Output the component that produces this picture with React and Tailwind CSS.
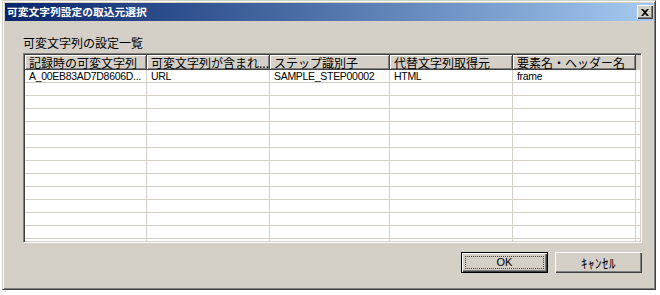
import React from 'react';

const jp = "font-['Noto_Sans_CJK_JP',sans-serif]";
const latin = "font-['Liberation_Sans','Noto_Sans_CJK_JP',sans-serif]";

const colWidths = ['w-[122px]', 'w-[123px]', 'w-[120px]', 'w-[123px]', 'w-[123px]'];
const headers = ['記録時の可変文字列', '可変文字列が含まれ...', 'ステップ識別子', '代替文字列取得元', '要素名・ヘッダー名'];
const firstRow = ['A_00EB83AD7D8606D...', 'URL', 'SAMPLE_STEP00002', 'HTML', 'frame'];

const raised =
  'shadow-[inset_1px_1px_0_#ffffff,inset_-1px_-1px_0_#404040,inset_-2px_-2px_0_#808080]';

const CloseIcon = () => (
  <svg width="8" height="7" viewBox="0 0 8 7">
    <path d="M0 0h2l2 2 2-2h2L5 3.5 8 7H6L4 5 2 7H0l3-3.5z" fill="#000" />
  </svg>
);

const Header = () => (
  <div className="flex h-[15px] bg-[#d4d0c8] shrink-0">
    {headers.map((h, i) => (
      <div
        key={i}
        className={`${colWidths[i]} h-full shrink-0 flex items-center pl-[4px] text-[12px] leading-[13px] text-black whitespace-nowrap border-r border-b border-[#404040] shadow-[inset_1px_1px_0_#ffffff,inset_-1px_-1px_0_#808080] ${jp}`}
      >
        {h}
      </div>
    ))}
    <div className="flex-1 h-full" />
  </div>
);

const Row = ({ values }) => (
  <div className="flex h-[13px] shrink-0 border-b border-[#d4d0c8]">
    {colWidths.map((w, i) => (
      <div
        key={i}
        className={`${w} h-full shrink-0 border-r border-[#d4d0c8] pl-[4px] text-[10.5px] leading-[12px] tracking-[-0.3px] text-black whitespace-nowrap ${latin}`}
      >
        {values ? values[i] : ''}
      </div>
    ))}
  </div>
);

const App = () => {
  const rows = [firstRow, ...Array(13).fill(null)];

  return (
    <div className="w-[660px] h-[295px] bg-white">
      <div className="ml-[2px] w-[654px] h-[290px] bg-[#d4d0c8] border border-t-[#d4d0c8] border-l-[#d4d0c8] border-r-[#404040] border-b-[#404040] shadow-[inset_1px_1px_0_#ffffff,inset_-1px_-1px_0_#808080] p-[2px] flex flex-col">
        {/* title bar */}
        <div className="h-[18px] shrink-0 flex items-center justify-between bg-linear-to-r from-[#0a246a] to-[#a6caf0]">
          <span className={`pl-[2px] text-[10.75px] leading-[14px] font-bold text-white ${jp}`}>
            可変文字列設定の取込元選択
          </span>
          <button className={`w-[16px] h-[14px] bg-[#d4d0c8] flex items-center justify-center ${raised}`}>
            <CloseIcon />
          </button>
        </div>

        {/* body */}
        <div className="flex flex-col pl-[18px] pr-[11px]">
          <div className={`mt-[15px] h-[14px] text-[12px] leading-[14px] text-black ${jp}`}>
            可変文字列の設定一覧
          </div>

          <div className="mt-[3px] h-[190px] border border-t-[#808080] border-l-[#808080] border-r-white border-b-white shadow-[inset_1px_1px_0_#404040,inset_-1px_-1px_0_#d4d0c8] p-[1px]">
            <div className="h-full bg-white flex flex-col overflow-hidden">
              <Header />
              {rows.map((r, i) => (
                <Row key={i} values={r} />
              ))}
            </div>
          </div>

          <div className="mt-[9px] flex justify-end gap-[7px]">
            <button className={`w-[87px] h-[21px] p-[3px] bg-[#d4d0c8] border border-black flex ${raised}`}>
              <span className={`flex-1 flex items-center justify-center border border-dotted border-[#404040] text-[11px] text-black ${latin}`}>
                OK
              </span>
            </button>
            <button
              className={`w-[87px] h-[21px] bg-[#d4d0c8] flex items-center justify-center text-[13px] tracking-[0.5px] text-black ${raised} ${jp}`}
            >
              ｷｬﾝｾﾙ
            </button>
          </div>
        </div>
      </div>
    </div>
  );
};

export default App;
